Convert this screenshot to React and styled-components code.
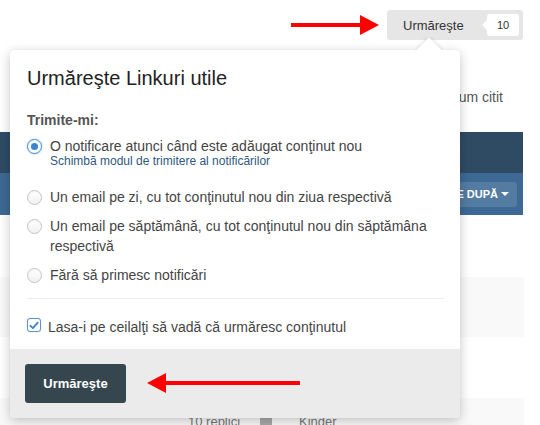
import React from "react";
import styled, { createGlobalStyle } from "styled-components";

const GlobalStyle = createGlobalStyle`
  html, body { margin: 0; padding: 0; background: #fff; }
  body { font-family: "Liberation Sans", Arial, Helvetica, sans-serif; color: #444; }
  * { box-sizing: border-box; }
`;

const Page = styled.div`
  position: relative;
  width: 540px;
  height: 425px;
  overflow: hidden;
  background: #fff;
`;

const TopBar = styled.div`
  display: flex;
  justify-content: flex-end;
  padding: 10px 17px 0 0;
`;

const FollowGroup = styled.div`
  display: flex;
  align-items: center;
  width: 136px;
  height: 30px;
  padding-left: 16px;
  background: #e6e6e6;
  border-radius: 3px;
`;

const FollowLabel = styled.span`
  font-size: 13px;
  color: #333;
`;

const CountBadge = styled.span`
  position: relative;
  margin-left: auto;
  margin-right: 4px;
  width: 32px;
  height: 22px;
  display: flex;
  align-items: center;
  justify-content: center;
  background: #fff;
  border-radius: 3px;
  font-size: 11px;
  color: #333;
  &::before {
    content: "";
    position: absolute;
    left: -5px;
    top: 6px;
    border-style: solid;
    border-width: 5px 5px 5px 0;
    border-color: transparent #fff transparent transparent;
  }
`;

const MetaRow = styled.div`
  display: flex;
  justify-content: flex-end;
  margin-top: 47px;
  height: 20px;
  padding-right: 37px;
`;

const MetaLink = styled.span`
  font-size: 14px;
  line-height: 20px;
  color: #555;
`;

const ListHeader = styled.div`
  margin-top: 25px;
  width: 523px;
`;

const HeaderTitleBar = styled.div`
  height: 41px;
  background: #2f4b64;
`;

const HeaderToolbar = styled.div`
  height: 42px;
  display: flex;
  align-items: center;
  justify-content: flex-end;
  padding-right: 6px;
  background: #3d6994;
`;

const SortButton = styled.div`
  display: flex;
  align-items: center;
  gap: 3px;
  height: 25px;
  padding: 0 8px 0 10px;
  border-radius: 3px;
  background: rgba(255, 255, 255, 0.12);
  color: #fff;
  font-size: 11px;
  font-weight: bold;
`;

const Caret = styled.span`
  display: inline-block;
  border-style: solid;
  border-width: 4px 4px 0 4px;
  border-color: #fff transparent transparent transparent;
`;

const TopicRow = styled.div`
  width: 524px;
  height: ${(p) => p.$h}px;
  background: ${(p) => (p.$light ? "#f9f9f9" : "#fff")};
  display: flex;
  align-items: flex-start;
  padding: ${(p) => (p.$pad ? "16px 0 0 188px" : "0")};
  gap: 20px;
`;

const StatText = styled.span`
  font-size: 13px;
  color: #777;
  line-height: 16px;
`;

const Avatar = styled.span`
  width: 12px;
  height: 24px;
  margin-top: -2px;
  background: #a9a9a9;
  margin-right: 7px;
`;

const Popover = styled.div`
  position: absolute;
  left: 10px;
  top: 50px;
  width: 450px;
  background: #fff;
  border-radius: 4px;
  box-shadow: 0 3px 12px rgba(0, 0, 0, 0.22), 0 0 1px rgba(0, 0, 0, 0.12);
`;

const PopArrow = styled.div`
  position: absolute;
  top: -13px;
  left: 405px;
  width: 28px;
  height: 13px;
  overflow: hidden;
  &::after {
    content: "";
    position: absolute;
    left: 5px;
    top: 4px;
    width: 18px;
    height: 18px;
    background: #fff;
    transform: rotate(45deg);
    box-shadow: 0 0 4px rgba(0, 0, 0, 0.18);
  }
`;

const PopBody = styled.div`
  padding: 17px 16px 12px 17px;
`;

const Title = styled.h3`
  margin: 0;
  font-size: 20px;
  line-height: 22px;
  font-weight: normal;
  color: #222;
`;

const SectionLabel = styled.div`
  margin-top: 21px;
  font-size: 14px;
  line-height: 20px;
  font-weight: bold;
  color: #555;
`;

const OptionList = styled.div`
  margin-top: 6px;
  display: flex;
  flex-direction: column;
  gap: 9px;
`;

const Option = styled.label`
  display: flex;
  align-items: flex-start;
  gap: 8px;
`;

const Radio = styled.span`
  flex: none;
  position: relative;
  width: 15px;
  height: 15px;
  margin-top: 3px;
  border-radius: 50%;
  border: 1px solid ${(p) => (p.$checked ? "#4a8fd6" : "#c4c4c4")};
  background: ${(p) =>
    p.$checked ? "#fff" : "linear-gradient(#fff, #f1f1f1)"};
  box-shadow: ${(p) =>
    p.$checked ? "0 0 2px rgba(74,143,214,0.6)" : "inset 0 1px 1px rgba(0,0,0,0.04)"};
  &::after {
    content: "";
    display: ${(p) => (p.$checked ? "block" : "none")};
    position: absolute;
    left: 3px;
    top: 3px;
    width: 7px;
    height: 7px;
    border-radius: 50%;
    background: #3c84cc;
  }
`;

const OptionText = styled.div`
  font-size: 14px;
  line-height: 20px;
  color: #444;
`;

const SubText = styled.div`
  margin: -3px 0 9px;
  font-size: 12px;
  line-height: 16px;
  color: #2f5880;
`;

const Divider = styled.hr`
  margin: 13px 0 18px;
  border: 0;
  height: 1px;
  background: #ececec;
`;

const CheckRow = styled.label`
  display: flex;
  align-items: flex-start;
  gap: 7px;
  font-size: 14px;
  line-height: 20px;
  color: #444;
`;

const CheckBox = styled.span`
  flex: none;
  width: 14px;
  height: 14px;
  margin-top: 1px;
  border: 1px solid #5b95d3;
  border-radius: 3px;
  display: flex;
  align-items: center;
  justify-content: center;
  background: #fff;
  box-shadow: 0 0 1px rgba(74, 143, 214, 0.5);
`;

const Footer = styled.div`
  padding: 15px;
  background: #ebebeb;
  border-radius: 0 0 4px 4px;
`;

const PrimaryButton = styled.button`
  width: 101px;
  height: 39px;
  border: 0;
  border-radius: 3px;
  background: #36464f;
  color: #fff;
  font-family: inherit;
  font-size: 13px;
  font-weight: bold;
  cursor: pointer;
`;

const Annotation = styled.svg`
  position: absolute;
  left: ${(p) => p.$x}px;
  top: ${(p) => p.$y}px;
  overflow: visible;
`;

export default function App() {
  return (
    <>
      <GlobalStyle />
      <Page>
        <TopBar>
          <FollowGroup>
            <FollowLabel>Urmăreşte</FollowLabel>
            <CountBadge>10</CountBadge>
          </FollowGroup>
        </TopBar>
        <MetaRow>
          <MetaLink>Marchează forum citit</MetaLink>
        </MetaRow>
        <ListHeader>
          <HeaderTitleBar />
          <HeaderToolbar>
            <SortButton>
              SORTARE DUPĂ <Caret />
            </SortButton>
          </HeaderToolbar>
        </ListHeader>
        <TopicRow $h={62} />
        <TopicRow $h={60} $light />
        <TopicRow $h={61} />
        <TopicRow $h={40} $light $pad>
          <StatText>10 replici</StatText>
          <Avatar />
          <StatText>Kinder</StatText>
        </TopicRow>

        <Popover>
          <PopArrow />
          <PopBody>
            <Title>Urmăreşte Linkuri utile</Title>
            <SectionLabel>Trimite-mi:</SectionLabel>
            <OptionList>
              <Option>
                <Radio $checked />
                <div>
                  <OptionText>O notificare atunci când este adăugat conţinut nou</OptionText>
                  <SubText>Schimbă modul de trimitere al notificărilor</SubText>
                </div>
              </Option>
              <Option>
                <Radio />
                <OptionText>Un email pe zi, cu tot conţinutul nou din ziua respectivă</OptionText>
              </Option>
              <Option>
                <Radio />
                <OptionText>
                  Un email pe săptămână, cu tot conţinutul nou din săptămâna respectivă
                </OptionText>
              </Option>
              <Option>
                <Radio />
                <OptionText>Fără să primesc notificări</OptionText>
              </Option>
            </OptionList>
            <Divider />
            <CheckRow>
              <CheckBox>
                <svg width="10" height="9" viewBox="0 0 10 9">
                  <path
                    d="M1.3 4.6 L3.9 7.1 L8.7 1.6"
                    fill="none"
                    stroke="#3c84cc"
                    strokeWidth="1.8"
                    strokeLinecap="round"
                    strokeLinejoin="round"
                  />
                </svg>
              </CheckBox>
              Lasa-i pe ceilalţi să vadă că urmăresc conţinutul
            </CheckRow>
          </PopBody>
          <Footer>
            <PrimaryButton>Urmăreşte</PrimaryButton>
          </Footer>
        </Popover>

        <Annotation $x={288} $y={13} width="92" height="24" viewBox="0 0 92 24">
          <line x1="3" y1="12" x2="76" y2="12" stroke="#f00" strokeWidth="4" />
          <polygon points="72,2 91,12 72,22" fill="#f00" />
        </Annotation>
        <Annotation $x={145} $y={372} width="158" height="22" viewBox="0 0 158 22">
          <line x1="18" y1="11" x2="155" y2="11" stroke="#f00" strokeWidth="4" />
          <polygon points="2,11 21,1 21,21" fill="#f00" />
        </Annotation>
      </Page>
    </>
  );
}
